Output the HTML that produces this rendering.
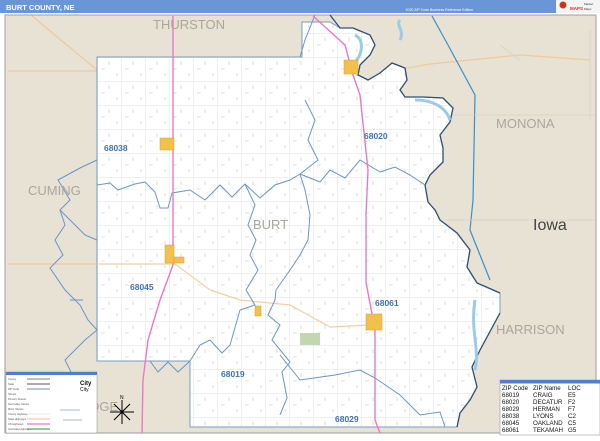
<!DOCTYPE html>
<html><head><style>
body{margin:0;width:600px;height:436px;overflow:hidden;background:#fff;font-family:"Liberation Sans",sans-serif}
</style></head><body>
<svg width="600" height="436" viewBox="0 0 600 436" xmlns="http://www.w3.org/2000/svg" font-family="Liberation Sans, sans-serif">
<defs>
<pattern id="g" width="24" height="24" patternUnits="userSpaceOnUse" x="97" y="57">
<path d="M0 0.5H24M0.5 0V24" stroke="#ececec" stroke-width="0.8" fill="none"/>
<path d="M12 4v4M4 12h4M20 16v3" stroke="#c4c4c4" stroke-width="0.6"/>
</pattern>
<clipPath id="c"><path id="cp" d="M97 57H302V22H330L340 28L353 28L370 35L375 45L370 55L360 65L358 75L368 80L380 73L392 63L405 68L407 80L400 90L405 97L423 97L443 98L453 108L450 122L440 135L443 148L443 162L430 175L425 185L428 202L435 210L440 220L457 233L470 250L467 267L477 283L500 293L500 313L480 350L472 367L477 387L470 400L460 413L457 427H190V361H97Z"/></clipPath>
</defs>
<rect x="0" y="0" width="600" height="436" fill="#fff"/>
<rect x="0" y="0" width="556" height="13" fill="#6a95d6"/>
<text x="6" y="10" font-size="7.5" font-weight="bold" fill="#fff">BURT COUNTY, NE</text>
<text x="473" y="11" font-size="3.5" fill="#fff" text-anchor="end">2020 ZIP Code Business Reference Edition</text>
<rect x="556" y="0" width="44" height="13" fill="#f4f4f4"/>
<circle cx="563" cy="5" r="3.5" fill="#c32"/>
<text x="570" y="10" font-size="4.5" font-weight="bold" fill="#c33">MAPS</text>
<text x="584" y="5" font-size="3" fill="#333">Market</text>
<text x="584" y="10" font-size="3" fill="#333">Maps</text>
<rect x="5" y="15" width="591" height="418" fill="#e7e2d3" stroke="#9c9c9c" stroke-width="1"/>
<g stroke="#f0c99a" stroke-width="1.2" fill="none">
<path d="M32 16L97 70"/><path d="M8 71H97"/><path d="M8 264H175"/>
<path d="M380 73L430 64L520 55L590 60"/><path d="M330 68H97"/>
</g>
<path d="M432 16L448 45L475 95L473 200L470 230L490 280" stroke="#3a8fc9" stroke-width="1.2" fill="none"/>
<path d="M400 20C395 25 405 30 400 40" stroke="#9ccbe8" stroke-width="3" fill="none"/>
<path d="M445 220H595M445 115H595M500 45L520 60M590 30V120" stroke="#d7d1c4" stroke-width="0.8" fill="none"/>
<use href="#cp" fill="#fff"/>
<g clip-path="url(#c)"><rect x="90" y="20" width="420" height="410" fill="url(#g)"/></g>
<use href="#cp" fill="none" stroke="#7a9cc6" stroke-width="1"/>
<path d="M330 15L340 28L353 28L370 35L375 45L370 55L360 65L358 75L368 80L380 73L392 63L405 68L407 80L400 90L405 97L423 97L443 98L453 108L450 122L440 135L443 148L443 162L430 175L425 185L428 202L435 210L440 220L457 233L470 250L467 267L477 283L500 293M500 313L480 350L472 367L477 387L470 400L460 413L457 427" stroke="#2f4f78" stroke-width="1.3" fill="none"/>
<path d="M355 35C365 40 362 55 355 62M415 100C430 100 445 105 450 120M475 300C470 330 480 350 475 370" stroke="#9ccbe8" stroke-width="3" fill="none"/>
<g stroke="#f3cfa6" stroke-width="1.2" fill="none">
<path d="M97 264H175L210 290L240 300L290 305L330 327L370 325"/>
</g>
<g stroke="#6a95cc" stroke-width="1" fill="none">
<path d="M97 185L110 183L118 190L135 184L145 182L155 192L160 208L168 208L172 193L190 190L205 200L220 185L232 197L245 184L260 198L275 185L290 180L300 174"/>
<path d="M300 174L320 182L330 170L345 178L360 160L380 172L395 167L410 175L425 185"/>
<path d="M305 100L315 120L308 140L318 160L300 174"/>
<path d="M245 184L255 205L248 225L256 240L250 255L258 270L246 290L255 305L240 310"/>
<path d="M300 174L305 190L310 215L308 240L300 255L290 270L276 290L275 300L268 315L280 325L272 340L290 362L282 372L287 398L280 415"/>
<path d="M190 361L200 345L210 340L222 353L230 345L240 310"/>
<path d="M280 355L300 380L335 375L360 370L375 378L400 395L420 415L440 412L445 427"/>
<path d="M97 240L85 235L60 210L70 200L58 180L80 168L97 160"/>
<path d="M97 330L85 340L65 360L75 380L97 410"/>
<path d="M60 210L65 225L55 240L63 255L50 268L65 290L80 305L88 320L97 330"/>
<path d="M70 300L83 300"/>
<path d="M150 361L158 372L168 362L178 372L190 361"/>
<path d="M315 15L305 40L300 57"/>
</g>
<path d="M173 16V265L160 300L148 340L143 380L142 433" stroke="#ef77c6" stroke-width="1.4" fill="none"/>
<path d="M313 16L345 45L353 75L360 95L368 170L366 215L366 282L375 330L375 420L380 433" stroke="#ef77c6" stroke-width="1.4" fill="none"/>
<g fill="#f1c24b" stroke="#d99a2c" stroke-width="0.5">
<rect x="344" y="60" width="14" height="14"/><rect x="160" y="138" width="14" height="12"/>
<rect x="165" y="245" width="9" height="18"/><rect x="174" y="257" width="10" height="6"/>
<rect x="366" y="314" width="16" height="16"/><rect x="255" y="306" width="6" height="10"/>
</g>
<rect x="300" y="333" width="20" height="12" fill="#c2d7b0"/>
<g font-size="8.5" font-weight="bold" fill="#3e74b9">
<text x="104" y="151">68038</text><text x="364" y="139">68020</text>
<text x="130" y="290">68045</text><text x="375" y="306">68061</text>
<text x="221" y="377">68019</text><text x="335" y="422">68029</text>
</g>
<g fill="#aaa69e" font-size="13">
<text x="153" y="29">THURSTON</text><text x="28" y="195">CUMING</text>
<text x="253" y="229">BURT</text><text x="496" y="128">MONONA</text>
<text x="496" y="334">HARRISON</text><text x="90" y="411">DGE</text>
</g>
<text x="533" y="230" font-size="16" fill="#444">Iowa</text>
<g stroke="#000" stroke-width="1"><path d="M122 400V424M110 412H134M114 404L130 420M130 404L114 420"/></g>
<text x="120" y="399" font-size="5">N</text>
<rect x="6" y="372" width="91" height="61" fill="#fff" stroke="#888" stroke-width="0.5"/>
<rect x="6" y="372" width="91" height="3" fill="#4f7fd0"/>
<g font-size="2.6" fill="#555">
<text x="8" y="380">County</text><text x="8" y="385">State</text><text x="8" y="390">ZIP Code</text><text x="8" y="395">Streets</text><text x="8" y="400">Primary Streets</text><text x="8" y="405">Secondary Streets</text><text x="8" y="410">Minor Streets</text><text x="8" y="415">County Highways</text><text x="8" y="420">State Highways</text><text x="8" y="425">US Highways</text><text x="8" y="430">Interstate Highways</text>
</g>
<g stroke-width="1.2">
<path d="M27 379H50" stroke="#999"/><path d="M27 384H50" stroke="#777"/><path d="M27 389H50" stroke="#8ab"/>
<path d="M27 414H50" stroke="#eee"/><path d="M27 419H50" stroke="#f3cfa6"/><path d="M27 424H50" stroke="#ef77c6"/><path d="M27 429H50" stroke="#5a5"/>
</g>
<text x="80" y="385" font-size="6" font-weight="bold" fill="#000">City</text>
<text x="80" y="391" font-size="5" fill="#000">City</text>
<path d="M60 410H80M63 420H82" stroke="#47a" stroke-width="0.6"/>
<rect x="500" y="380" width="100" height="55" fill="#fff" stroke="#888" stroke-width="0.5"/>
<rect x="500" y="380" width="100" height="3.5" fill="#4f7fd0"/>
<g font-size="6.2" fill="#111">
<text x="502" y="390">ZIP Code</text><text x="533" y="390">ZIP Name</text><text x="568" y="390">LOC</text>
<text x="502" y="397">68019</text><text x="533" y="397">CRAIG</text><text x="568" y="397">E5</text>
<text x="502" y="404">68020</text><text x="533" y="404">DECATUR</text><text x="568" y="404">F2</text>
<text x="502" y="411">68029</text><text x="533" y="411">HERMAN</text><text x="568" y="411">F7</text>
<text x="502" y="418">68038</text><text x="533" y="418">LYONS</text><text x="568" y="418">C2</text>
<text x="502" y="425">68045</text><text x="533" y="425">OAKLAND</text><text x="568" y="425">C5</text>
<text x="502" y="432">68061</text><text x="533" y="432">TEKAMAH</text><text x="568" y="432">G5</text>
</g>
</svg>
</body></html>
